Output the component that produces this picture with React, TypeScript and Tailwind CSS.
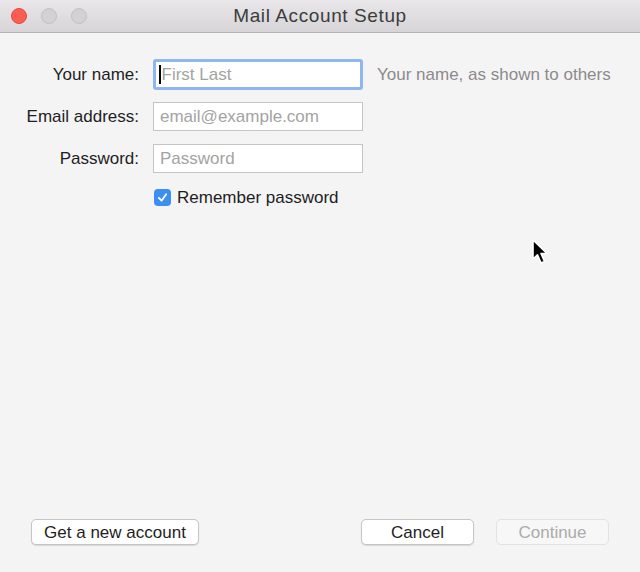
import { useState } from "react";

const font = { fontFamily: '"Liberation Sans", Arial, sans-serif' };

function Field({
  label,
  placeholder,
  focused,
  type = "text",
}: {
  label: string;
  placeholder: string;
  focused?: boolean;
  type?: string;
}) {
  return (
    <div className="flex items-center h-[29px]">
      <label className="w-[140px] text-right text-[17px] text-[#1e1e1e] pr-[1px] whitespace-nowrap">{label}</label>
      <div
        className={
          focused
            ? "ml-[13px] w-[210px] h-[31px] rounded-[3px] border-[3px] border-[#8db7ee] bg-white flex items-center"
            : "ml-[13px] w-[210px] h-[29px] border border-[#c4c4c4] bg-white flex items-center"
        }
      >
        {focused && <span className="ml-[3px] w-[1.5px] h-[19px] bg-black" />}
        <input
          type={type}
          placeholder={placeholder}
          className={
            focused
              ? "flex-1 min-w-0 bg-transparent outline-none pl-[1px] text-[17px] placeholder:text-[#a3a3a3]"
              : "flex-1 min-w-0 bg-transparent outline-none pl-[6px] text-[17px] placeholder:text-[#a3a3a3]"
          }
          style={font}
        />
      </div>
    </div>
  );
}

export default function App() {
  const [remember, setRemember] = useState(true);

  return (
    <div className="relative w-[640px] h-[572px] bg-[#f5f4f5] flex flex-col overflow-hidden" style={font}>
      {/* title bar */}
      <div className="h-[33px] flex items-center px-[11px] bg-gradient-to-b from-[#e9e7e9] to-[#d6d4d6] border-b border-[#b5b4b5] relative">
        <div className="flex gap-[14px]">
          <span className="w-[16px] h-[16px] rounded-full bg-[#fc5d52] border border-[#e2483e]" />
          <span className="w-[16px] h-[16px] rounded-full bg-[#d3d1d3] border border-[#c2c0c2]" />
          <span className="w-[16px] h-[16px] rounded-full bg-[#d3d1d3] border border-[#c2c0c2]" />
        </div>
        <div className="absolute inset-0 flex items-center justify-center text-[19px] tracking-[0.6px] text-[#3c3c3c] pointer-events-none">
          Mail Account Setup
        </div>
      </div>

      {/* form */}
      <div className="flex flex-col pt-[27px] gap-[13px]">
        <div className="flex items-center">
          <Field label="Your name:" placeholder="First Last" focused />
          <span className="ml-[14px] text-[17px] text-[#8c8a8c] whitespace-nowrap">Your name, as shown to others</span>
        </div>
        <Field label="Email address:" placeholder="email@example.com" type="email" />
        <Field label="Password:" placeholder="Password" type="password" />
        <label className="flex items-center ml-[154px] -mt-[1px] gap-[6px] cursor-default">
          <button
            onClick={() => setRemember(!remember)}
            className={
              remember
                ? "w-[17px] h-[17px] rounded-[4px] bg-[#3d8ef2] flex items-center justify-center"
                : "w-[17px] h-[17px] rounded-[4px] bg-white border border-[#b5b5b5]"
            }
          >
            {remember && (
              <svg width="11" height="11" viewBox="0 0 12 12">
                <path d="M2 6.5 L5 9.5 L10 2.5" fill="none" stroke="white" strokeWidth="2" strokeLinecap="round" strokeLinejoin="round" />
              </svg>
            )}
          </button>
          <span className="text-[17px] text-[#1e1e1e]">Remember password</span>
        </label>
      </div>

      <div className="flex-1" />

      {/* buttons */}
      <div className="flex items-center px-[31px] pb-[27px]">
        <button className="w-[168px] h-[26px] rounded-[5px] bg-white border border-[#c5c5c5] shadow-[0_1px_1px_rgba(0,0,0,0.12)] text-[17px] text-[#1e1e1e]">
          Get a new account
        </button>
        <div className="flex-1" />
        <button className="w-[113px] h-[26px] rounded-[5px] bg-white border border-[#c5c5c5] shadow-[0_1px_1px_rgba(0,0,0,0.12)] text-[17px] text-[#1e1e1e]">
          Cancel
        </button>
        <button
          disabled
          className="ml-[22px] w-[113px] h-[26px] rounded-[5px] bg-[#f7f7f7] border border-[#e3e2e3] text-[17px] text-[#ababab]"
        >
          Continue
        </button>
      </div>

      {/* mouse pointer */}
      <svg className="absolute left-[531px] top-[238px] pointer-events-none" width="20" height="28" viewBox="0 0 20 28">
        <path
          d="M2 2 L2 21 L6.5 16.8 L10 25 L13.5 23.5 L10 15.5 L16 15.5 Z"
          fill="black"
          stroke="white"
          strokeWidth="1.6"
          strokeLinejoin="round"
        />
      </svg>
    </div>
  );
}
